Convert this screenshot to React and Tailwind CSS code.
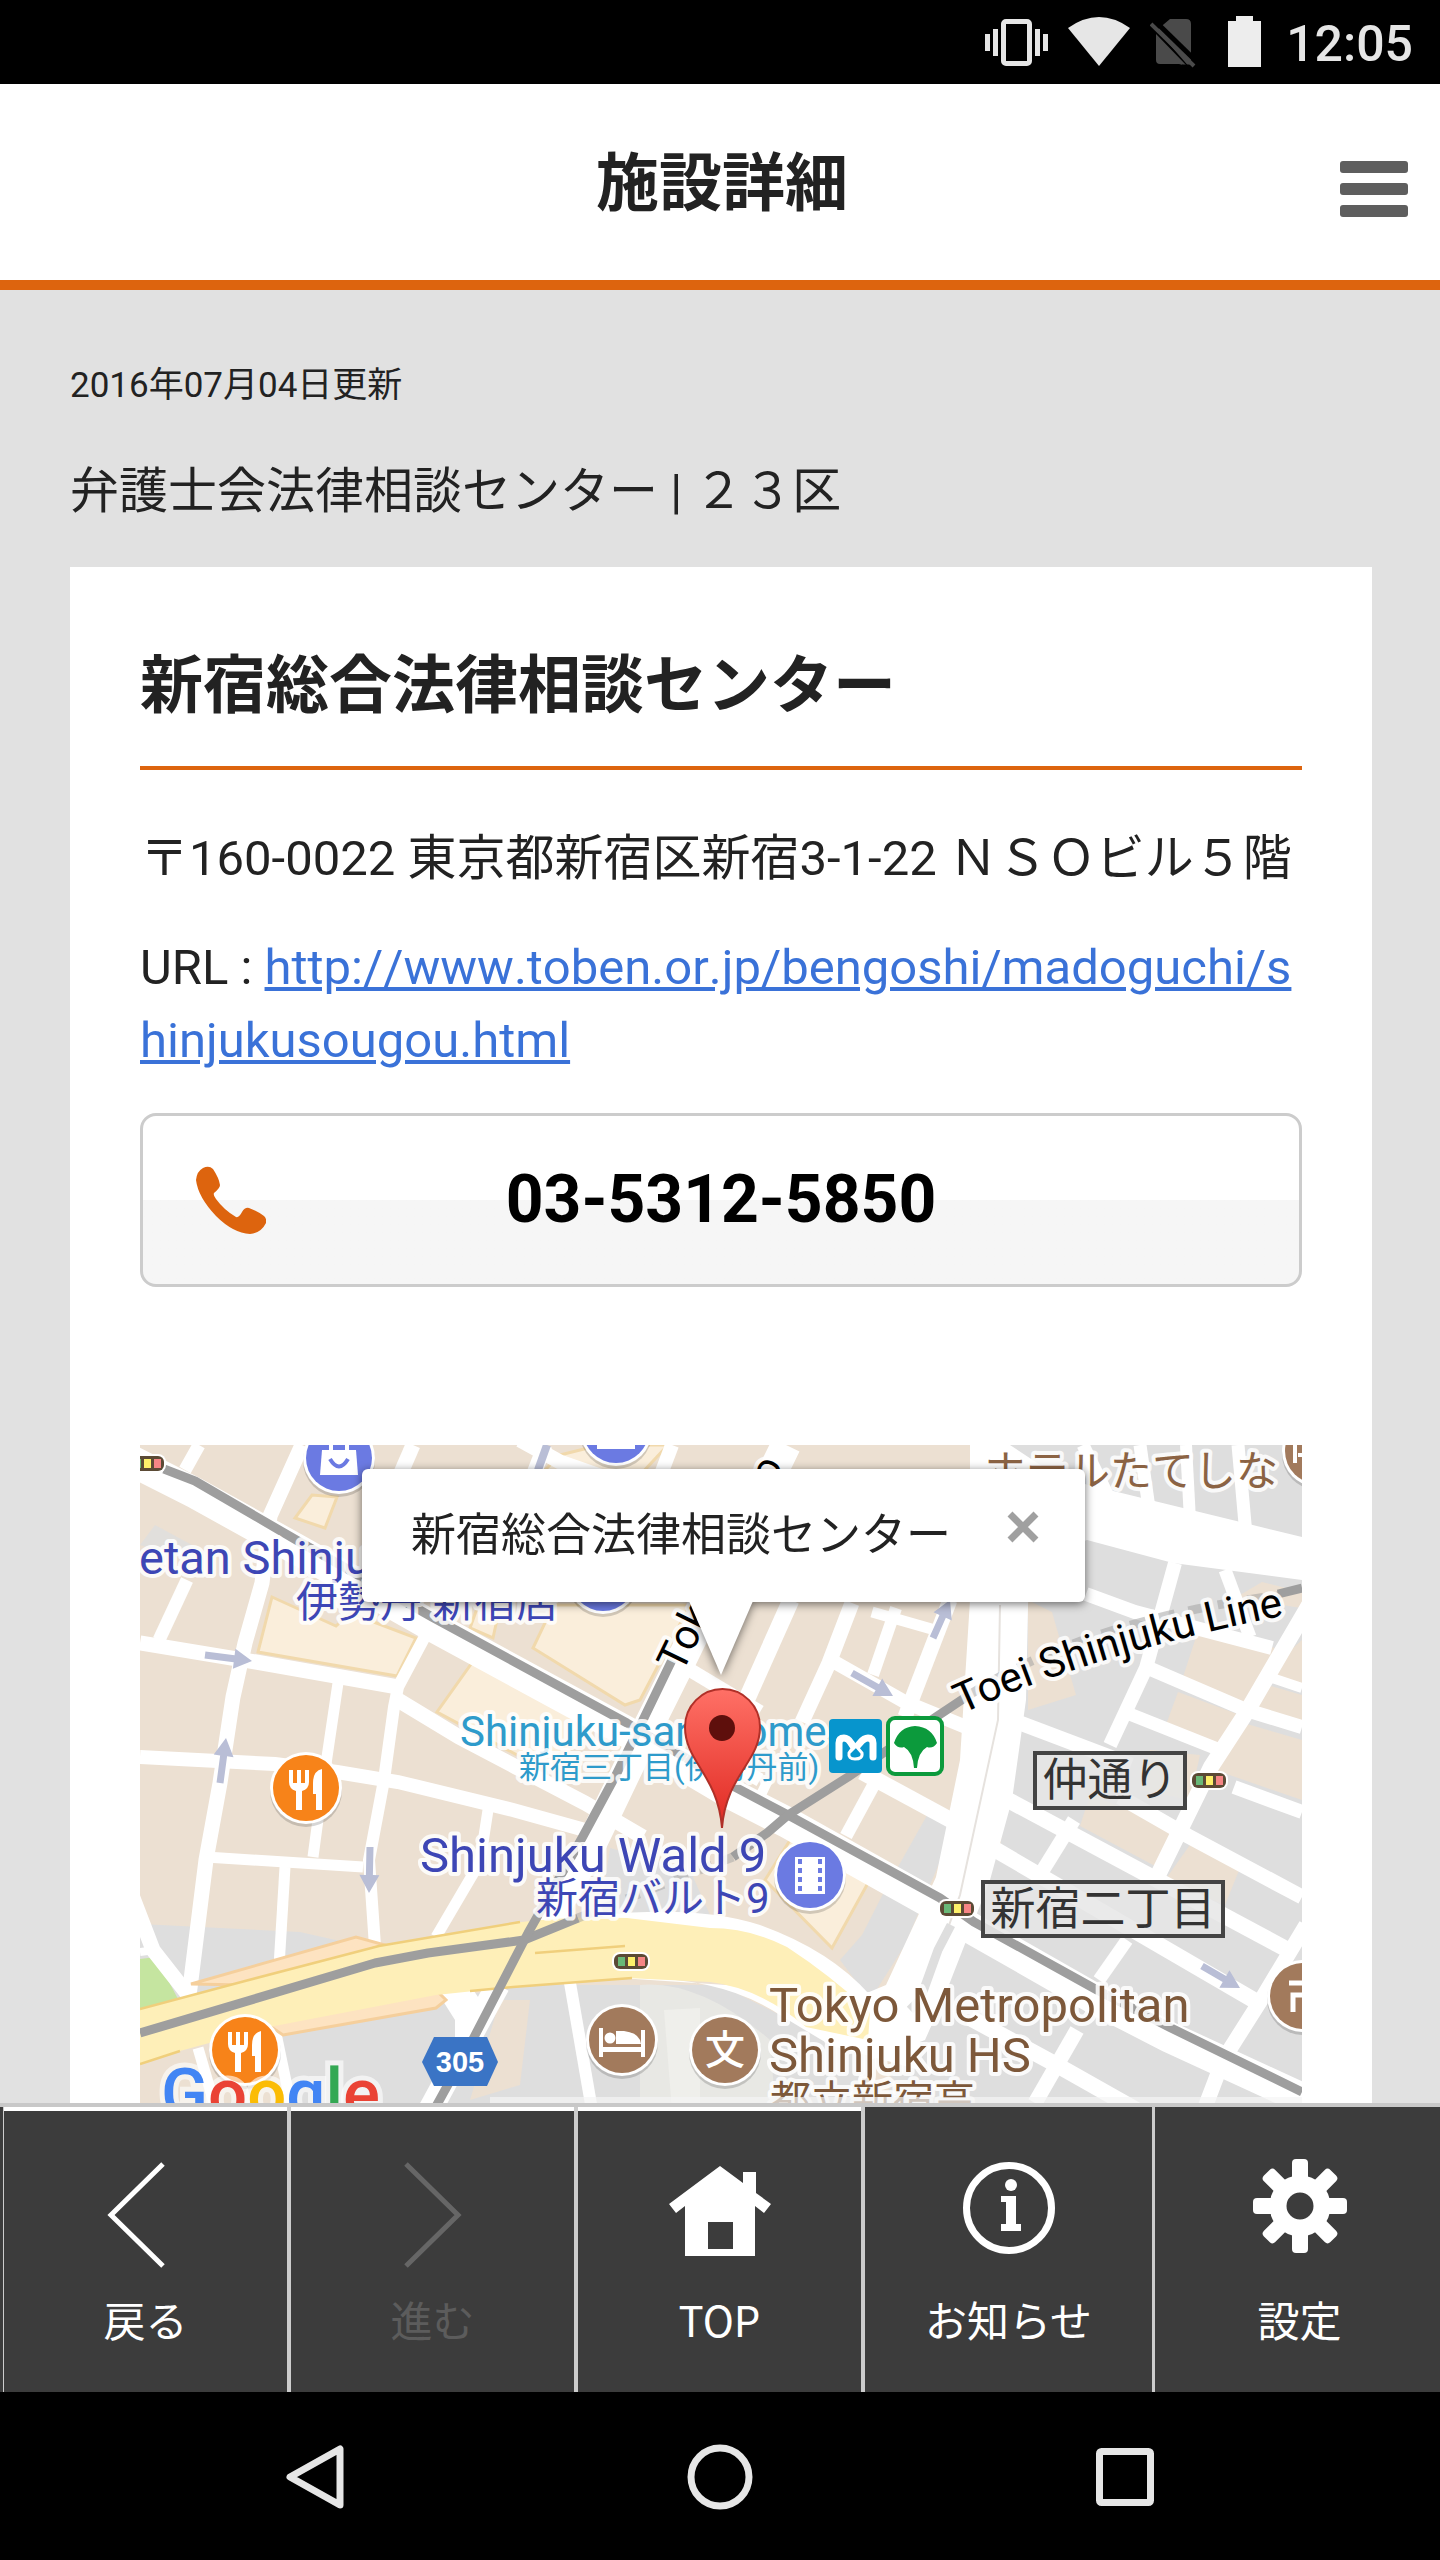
import React from "react";

const FONT = 'font-["Roboto","Noto_Sans_CJK_JP",sans-serif]';

function StatusBar() {
  return (
    <div className="flex h-[84px] shrink-0 items-center justify-end bg-black pr-[27px] text-[#e6e6e6]">
      <svg viewBox="985 16 64 52" className="mr-[19px] h-[52px] w-16" fill="#e6e6e6" aria-hidden="true">
        <rect x="985" y="34" width="5" height="17" />
        <rect x="993" y="29" width="5" height="27" />
        <rect x="1035" y="29" width="5" height="27" />
        <rect x="1043" y="34" width="5" height="17" />
        <rect x="1003.500" y="21.500" width="26" height="42" rx="2.500" fill="none" stroke="#e6e6e6" strokeWidth="5" />
      </svg>
      <svg viewBox="1068 16 62 52" className="mr-5 h-[52px] w-[62px]" fill="#e6e6e6" aria-hidden="true">
        <path d="M1068 28Q1099 6 1130 28L1099 66Z" />
      </svg>
      <svg viewBox="1151 16 48 52" className="mr-[30px] h-[52px] w-12" aria-hidden="true">
        <path d="M1171 19H1187Q1192 19 1192 24V69L1158 30ZM1157 34L1188 66L1180 64H1161Q1157 64 1157 60Z" fill="#4a4a4a" />
        <path d="M1157 22L1200 64" stroke="#000" strokeWidth="5" />
        <path d="M1183 64.500H1200V72H1183Z" fill="#000" />
        <path d="M1152 24L1195 66" stroke="#4a4a4a" strokeWidth="4" />
      </svg>
      <svg viewBox="1229 16 33 52" className="mr-[25px] h-[52px] w-[33px]" fill="#ededed" aria-hidden="true">
        <path d="M1237 16H1254V21H1262V67H1229V21H1237Z" />
      </svg>
      <span className="pt-1 text-[50px] leading-[56px] font-medium">12:05</span>
    </div>
  );
}

function Header() {
  return (
    <header className="relative flex h-[206px] shrink-0 items-center justify-center border-b-10 border-[#dd640e] bg-white pt-1 pl-1">
      <h1 className="text-[63px] leading-[90px] font-bold text-[#222]">施設詳細</h1>
      <button type="button" aria-label="メニュー" className="absolute top-[77px] right-8 flex flex-col gap-[10px]">
        <span className="h-3 w-[68px] rounded-[3px] bg-[#5e5e5e]" />
        <span className="h-3 w-[68px] rounded-[3px] bg-[#5e5e5e]" />
        <span className="h-3 w-[68px] rounded-[3px] bg-[#5e5e5e]" />
      </button>
    </header>
  );
}

/* Map coordinates: x 140-1302, y 1445-2165 */

const streets = [
  ["M199 1445L185 1470", 13],
  ["M302 1445L270 1516L262 1583L245 1643L233 1697L220 1783L206 1860L189 1996", 15],
  ["M413 1445L384 1512", 15],
  ["M545 1445L512 1530", 15],
  ["M672 1445L640 1530", 14],
  ["M520 1440L560 1462L640 1490", 15],
  ["M187 1580L159 1640", 13],
  ["M140 1643L256 1662L398 1687", 15],
  ["M430 1627L398 1687L394 1707L384 1780L369 1860L375 1946", 12],
  ["M338 1683L327 1757L317 1827L313 1857", 11],
  ["M398 1700L459 1737L516 1767L585 1803L643 1837", 15],
  ["M140 1757L275 1764L337 1772L398 1782L513 1810L585 1830", 14],
  ["M206 1857L363 1867", 11],
  ["M285 1867L279 1967", 11],
  ["M488 1810L480 1862L436 1937", 11],
  ["M130 1890L153 1950L189 1996", 15],
  ["M140 1952L155 1950", 8],
  ["M690 1670L760 1712", 14],
  ["M690 1740L760 1780", 14],
  ["M791 1600L741 1712", 17],
  ["M852 1603L829 1663L802 1722", 15],
  ["M896 1608L873 1675", 12],
  ["M950 1600L905 1717", 15],
  ["M829 1659L905 1702L966 1727", 14],
  ["M872 1612L935 1630", 11],
  ["M878 1777L846 1836", 13],
  ["M862 1772L958 1824", 16],
  ["M768 1780L757 1803", 10],
  ["M1140 1445L1150 1515", 13],
  ["M1083 1445L1110 1500", 13],
  ["M1186 1445L1190 1520", 12],
  ["M1238 1445L1246 1535", 13],
  ["M1086 1594L1135 1612L1272 1648", 14],
  ["M1175 1563L1146 1668L1110 1745", 14],
  ["M1225 1570L1250 1637", 13],
  ["M1312 1600L1246 1713L1211 1767L1158 1875", 16],
  ["M1146 1667L1246 1710L1302 1727", 14],
  ["M1127 1713L1220 1750", 13],
  ["M1020 1723L1131 1765", 15],
  ["M1269 1677L1302 1688", 10],
  ["M1234 1787L1302 1812", 14],
  ["M1120 1797L1188 1836L1302 1897", 15],
  ["M1008 1800L1288 1950", 16],
  ["M996 1850L1257 2002", 16],
  ["M1074 1820L1043 1870", 14],
  ["M1127 1940L1099 1980", 13],
  ["M1306 1925L1261 2000L1223 2060L1204 2110", 15],
  ["M970 2018L1055 2064L1140 2112", 16],
  ["M1077 2030L1035 2103", 15],
  ["M570 1983L592 2110", 12],
  ["M274 2024L292 2110", 11],
  ["M198 2048L216 2110", 11],
  ["M498 1985L430 2110", 24],
];

const blueArrows = [
  [205, 1655, 252, 1661],
  [220, 1783, 226, 1738],
  [370, 1847, 369, 1893],
  [933, 1638, 950, 1600],
  [852, 1673, 893, 1696],
  [1202, 1966, 1240, 1988],
];

function Arrow({ x1, y1, x2, y2 }) {
  const a = Math.atan2(y2 - y1, x2 - x1);
  const len = Math.hypot(x2 - x1, y2 - y1);
  return (
    <path
      transform={`translate(${x1} ${y1}) rotate(${(a * 180) / Math.PI})`}
      d={`M0 -3.500H${len - 18}V-10L${len} 0L${len - 18} 10V3.500H0Z`}
      fill="#b9bed6"
    />
  );
}

function Signal({ x, y }) {
  return (
    <g>
      <rect x={x - 2} y={y - 2} width="38" height="19" rx="8" fill="#fff" />
      <rect x={x} y={y} width="34" height="15" rx="6" fill="#5b4a35" />
      <rect x={x + 4} y={y + 3} width="7" height="9" fill="#69b877" />
      <rect x={x + 14} y={y + 3} width="7" height="9" fill="#fdf06a" />
      <rect x={x + 24} y={y + 3} width="7" height="9" fill="#f58585" />
    </g>
  );
}

function Poi({ x, y, color, children }) {
  return (
    <g transform={`translate(${x} ${y})`}>
      <circle cy="3" r="36" fill="#000" opacity=".16" />
      <circle r="36" fill="#fff" />
      <circle r="33" fill={color} />
      {children}
    </g>
  );
}

function Fork() {
  return (
    <g fill="#fff">
      <path d="M-17 -18V-6Q-17 1 -10 3V22H-4V3Q3 1 3 -6V-18H-1V-5H-5V-18H-9V-5H-13V-18Z" />
      <path d="M16 -19Q7 -17 7 -5V6H10V22H16Z" />
    </g>
  );
}

function Bag() {
  return (
    <g>
      <path d="M-17 -8H17L19 17H-19Z" fill="#fff" />
      <path d="M-8 -7V-15Q0 -26 8 -15V-7" fill="none" stroke="#fff" strokeWidth="4" />
      <path d="M-9 1Q0 16 9 1" fill="none" stroke="#6b7ae2" strokeWidth="4" />
    </g>
  );
}

function Label({ x, y, size, color, children, ...rest }) {
  return (
    <text x={x} y={y} fontSize={size} fill={color} stroke="#fff" strokeOpacity=".85" strokeWidth="8" strokeLinejoin="round" paintOrder="stroke" {...rest}>
      {children}
    </text>
  );
}

function MapDrawing() {
  return (
    <svg viewBox="140 1445 1162 720" preserveAspectRatio="xMidYMin slice" className={`h-full w-full ${FONT}`} role="img" aria-label="新宿総合法律相談センター周辺の地図">
      <rect x="140" y="1445" width="1162" height="720" fill="#ece0d2" />

      {/* grey blocks */}
      <g fill="#dedede">
        <path d="M1010 1445H1302V2165H880L900 2000L940 1930L1000 1850L1028 1600Z" />
        <path d="M140 1924L300 1932L380 1950L300 1975L140 2020Z" />
        <path d="M283 2035L440 2000L520 1985H720L870 2060L880 2165H283Z" />
        <path d="M930 1810L955 1825L905 1945L870 2000L840 1960L862 1935L885 1890Z" />
        <path d="M610 1848L690 1870L710 1915H600Z" />
        <path d="M140 1545L155 1525L205 1552L190 1560Z" opacity=".8" />
      </g>
      <path d="M640 1985Q700 1980 770 2040L780 2165H640Z" fill="#e8e8e4" />
      <path d="M664 2010L700 2008V2110H672Z" fill="#efefeb" />

      {/* beige blocks of the eastern district */}
      <g fill="#ece0d2">
        <path d="M1028 1600L1052 1612L1076 1695L1028 1710Z" />
        <path d="M1200 1625L1275 1648L1246 1708L1182 1680Z" />
        <path d="M1178 1692L1240 1715L1215 1748L1164 1730Z" />
        <path d="M1285 1655L1302 1640V1685L1270 1676Z" />
        <path d="M1264 1684L1302 1695V1722L1252 1706Z" />
        <path d="M1240 1722L1302 1740V1800L1215 1770Z" />
        <path d="M1090 1795L1180 1830L1155 1866L1080 1826Z" />
        <path d="M1192 1842L1240 1868L1225 1905L1165 1880Z" />
        <path d="M1150 1750L1200 1755L1190 1800L1140 1790Z" />
        <path d="M1262 1582L1302 1592V1608L1235 1598Z" />
        <path d="M500 2000H530L520 2085L470 2100Z" />
      </g>
      <path d="M140 1959L156 1957L178 1999L140 2009Z" fill="#c5e5a0" />

      {/* commercial buildings */}
      <g fill="#faeedb" stroke="#f1d9ac" strokeWidth="3">
        <path d="M312 1495L337 1497L325 1528L295 1518Z" />
        <path d="M272 1597L336 1626L350 1613L416 1638L397 1676L258 1652Z" />
        <path d="M545 1623L552 1605H690L640 1700L625 1705L533 1648Z" />
        <path d="M480 1600L500 1606L493 1638L470 1628Z" />
        <path d="M474 1660L590 1720L545 1770L437 1712Z" />
        <path d="M560 1455L600 1445H668L640 1475H540Z" />
        <path d="M797 1829L873 1874L832 1948L765 1880Z" />
      </g>

      {/* streets */}
      <g fill="none" stroke="#fff">
        {streets.map(([d, w]) => (
          <path key={d} d={d} strokeWidth={w} />
        ))}
        <path d="M130 1460L195 1493L298 1550L432 1626L627 1732L733 1795L788 1823L940 1908L974 1930L1097 2000L1169 2037L1310 2102" strokeWidth="31" />
        <path d="M786 1445L680 1663L640 1743L592 1843L534 1948" strokeWidth="30" />
      </g>

      {/* wide avenues */}
      <g fill="#fff">
        <path d="M970 1445H1010L1060 1478L1302 1537V1580L1173 1563L1087 1540L1029 1560L1026 1700L1012 1800L990 1880L945 1995L925 2040L870 2060L850 2000L886 1985L936 1877L960 1760L970 1600Z" />
        <path d="M600 1915Q700 1905 760 1925Q830 1950 870 1995L900 2040L850 2050Z" />
        <path d="M620 1978Q720 1975 780 2015L830 2045L920 2070V2040L800 1990Z" />
        <path d="M436 1990L470 1985L480 2000L500 1985L475 2045L455 2055L455 2020Z" />
      </g>
      <path d="M1000 1605L998 1720L960 1895L940 1950" fill="none" stroke="#e6e2de" strokeWidth="2" />
      <path d="M951 1925L938 1950L920 2000L910 2010" fill="none" stroke="#dedede" strokeWidth="9" />

      {/* highway */}
      <path d="M191 1984L356 1937L385 1945L245 1985ZM283 2035L436 2008L446 2000L436 1990L264 2022Z" fill="#fde3c1" stroke="#f5cf9c" strokeWidth="3" />
      <path d="M140 2009L245 1981L379 1946L513 1923Q570 1916 627 1918L710 1928Q750 1928 787 1947Q830 1975 870 2012L868 2040L806 2027Q760 1988 710 1982L627 1978L513 1987L436 1995L264 2028L180 2051L140 2064Z" fill="#feefb8" />
      <path d="M140 2009L245 1981L379 1946L520 1922M140 2064L180 2051M470 1991L513 1987L632 1978M535 1953L625 1946" fill="none" stroke="#f0cf7c" strokeWidth="2.500" />

      {blueArrows.map(([x1, y1, x2, y2]) => (
        <Arrow key={`${x1}-${y1}`} x1={x1} y1={y1} x2={x2} y2={y2} />
      ))}
      <path d="M547 1445L538 1470" stroke="#b9bed6" strokeWidth="8" />

      {/* railways */}
      <g fill="none" stroke="#9e9e9e" strokeWidth="9" strokeLinejoin="round">
        <path d="M164 1469L195 1481L298 1541L432 1617L627 1723L733 1786L788 1815L940 1898L974 1922L1097 1990L1169 2027L1302 2092" />
        <path d="M140 2033L375 1963L428 1953L524 1940L578 1918" />
        <path d="M733 1857L767 1833L788 1815L848 1777L936 1717L966 1697" />
        <path d="M966 1697Q1080 1622 1280 1595" strokeDasharray="16 14" opacity=".5" />
        <path d="M1278 1594L1302 1588" />
        <path d="M578 1918L733 1857" strokeDasharray="14 12" opacity=".45" />
        <path d="M672 1660L643 1720L616 1775L582 1838L528 1933L471 2043L434 2110" />
      </g>

      {/* points of interest */}
      <Poi x={339} y={1458} color="#6b7ae2"><Bag /></Poi>
      <Poi x={616} y={1430} color="#6b7ae2"><rect x="-19" y="-8" width="38" height="27" fill="#fff" /></Poi>
      <Poi x={603} y={1578} color="#6b7ae2" />
      <Poi x={306} y={1788} color="#f78319"><Fork /></Poi>
      <Poi x={245} y={2050} color="#f78319"><Fork /></Poi>
      <Poi x={622} y={2040} color="#a27a5c">
        <g fill="#fff">
          <path d="M-23 -12H-19V7H19V-10H23V17H19V12H-19V17H-23Z" />
          <circle cx="-12" cy="-2" r="5.500" />
          <path d="M-6 4V-9H2Q18 -7 19 4Z" />
        </g>
      </Poi>
      <Poi x={725} y={2050} color="#a27a5c">
        <text y="14" textAnchor="middle" fontSize="40" fontWeight="500" fill="#fff">文</text>
      </Poi>
      <Poi x={810} y={1875} color="#6b7ae2">
        <path d="M-15 -18H15V19H-15Z" fill="#fff" />
        <path d="M-10 -16V18M10 -16V18" stroke="#6b7ae2" strokeWidth="4" strokeDasharray="5 4" />
      </Poi>
      <Poi x={1303} y={1996} color="#a27a5c">
        <path d="M-14 -13H8M-10 16V-1H4V16" stroke="#fff" strokeWidth="5" fill="none" />
      </Poi>
      <Poi x={1318} y={1451} color="#a27a5c">
        <path d="M-23 -12V12M-20 4H-4" stroke="#fff" strokeWidth="4" />
      </Poi>

      <Signal x={130} y={1456} />
      <Signal x={614} y={1954} />
      <Signal x={940} y={1901} />
      <Signal x={1192} y={1773} />

      <path d="M434 2037H487L498 2062L487 2086H434L422 2062Z" fill="#3a74c5" />
      <text x="460" y="2072" textAnchor="middle" fontSize="29" fontWeight="700" fill="#fff" className='font-["Liberation_Sans",sans-serif]'>305</text>

      {/* area names */}
      <Label x="139" y="1574" size="47" color="#3d46b5">etan Shinjuku</Label>
      <Label x="296" y="1617" size="42" color="#3d46b5">伊勢丹 新宿店</Label>
      <Label x="984" y="1486" size="42" color="#8b6344">ホテルたてしな</Label>
      <Label x="460" y="1746" size="42" color="#2e9bcb">Shinjuku-sanchome</Label>
      <Label x="519" y="1778" size="31" color="#2e9bcb">新宿三丁目(伊勢丹前)</Label>
      <Label x="420" y="1872" size="49" color="#3d46b5">Shinjuku Wald 9</Label>
      <Label x="536" y="1913" size="42" color="#3d46b5">新宿バルト9</Label>
      <Label x="769" y="2022" size="49" color="#7d583a">Tokyo Metropolitan</Label>
      <Label x="769" y="2072" size="49" color="#7d583a">Shinjuku HS</Label>
      <Label x="770" y="2115" size="41" color="#7d583a">都立新宿高</Label>
      <Label x="0" y="0" size="42" color="#000" transform="translate(682 1674) rotate(-64)">Tokyo Metro</Label>
      <path id="toei" d="M962 1714Q1100 1650 1312 1610" fill="none" />
      <Label size="42" color="#000"><textPath href="#toei">Toei Shinjuku Line</textPath></Label>

      <g fill="#e6e6e6" fillOpacity=".85" stroke="#444" strokeWidth="4">
        <rect x="1035" y="1753" width="150" height="55" />
        <rect x="983" y="1882" width="240" height="54" />
      </g>
      <text x="1110" y="1796" textAnchor="middle" fontSize="45" fill="#333">仲通り</text>
      <text x="1103" y="1925" textAnchor="middle" fontSize="45" fill="#333">新宿二丁目</text>

      {/* station marks */}
      <rect x="829" y="1719" width="53" height="54" rx="4" fill="#0795cd" />
      <g fill="none" stroke="#fff" strokeLinecap="round" strokeLinejoin="round">
        <path d="M839 1757V1743Q839 1738 844 1738Q848 1738 851 1743L859 1755" strokeWidth="7" />
        <path d="M873 1757V1743Q873 1738 868 1738Q864 1738 860 1743L852 1752" strokeWidth="7" />
        <path d="M856 1746L849 1753Q848 1759 855 1759Q863 1759 862 1753Z" strokeWidth="3" fill="#0795cd" />
      </g>
      <rect x="888" y="1718" width="54" height="56" rx="7" fill="#fff" stroke="#0c9a3c" strokeWidth="4" />
      <path d="M894 1743Q899 1727 915 1726Q932 1727 937 1743Q933 1749 927 1747Q918 1752 917 1768H914Q913 1752 904 1747Q898 1749 894 1743Z" fill="#0c9a3c" />

      {/* location pin */}
      <defs>
        <linearGradient id="pin" x1="0" y1="0" x2="0" y2="1">
          <stop offset="0" stopColor="#ff7066" />
          <stop offset="1" stopColor="#e02a22" />
        </linearGradient>
      </defs>
      <path d="M722 1828C718 1775 685 1762 685 1727A37.500 38 0 0 1 760 1727C760 1762 726 1775 722 1828Z" fill="url(#pin)" stroke="#b03028" strokeWidth="2" />
      <circle cx="722" cy="1728" r="13" fill="#5e0f0c" />

      <rect x="490" y="2097" width="812" height="68" fill="#f5f5f5" opacity=".7" />
      <text x="161" y="2117" fontSize="69" fontWeight="500" stroke="#fff" strokeOpacity=".6" strokeWidth="10" paintOrder="stroke">
        <tspan fill="#4285f4">G</tspan>
        <tspan fill="#ea4335">o</tspan>
        <tspan fill="#fbbc05">o</tspan>
        <tspan fill="#4285f4">g</tspan>
        <tspan fill="#34a853">l</tspan>
        <tspan fill="#ea4335">e</tspan>
      </text>
    </svg>
  );
}

function MapPanel() {
  return (
    <div className="relative mt-[158px] h-[720px] overflow-hidden">
      <MapDrawing />
      <div className="absolute top-6 left-1/2 -translate-x-1/2 drop-shadow-[0_2px_5px_rgba(0,0,0,0.55)]">
        <div className="ml-[5px] flex h-[133px] items-center rounded-[6px] bg-white pr-[46px] pl-[49px]">
          <p className="text-[45px] leading-[66px] whitespace-nowrap text-[#222]">新宿総合法律相談センター</p>
          <button type="button" aria-label="閉じる" className="mb-[18px] ml-14">
            <svg viewBox="0 0 32 32" className="size-8" aria-hidden="true">
              <path d="M3 3L29 29M29 3L3 29" stroke="#a0a0a0" strokeWidth="7" />
            </svg>
          </button>
        </div>
        <svg viewBox="0 0 64 74" className="mx-auto -mt-px block h-[74px] w-16" aria-hidden="true">
          <path d="M0 0H64L32 74Z" fill="#fff" />
        </svg>
      </div>
    </div>
  );
}

function Detail() {
  return (
    <main className="min-h-0 flex-1 overflow-hidden bg-[#e1e1e1] px-[70px] pt-[69px] text-[#222]">
      <p className="text-[35px] leading-[54px]">2016年07月04日更新</p>
      <p className="mt-[42px] text-[49px] leading-[74px]">弁護士会法律相談センター | ２３区</p>
      <section className="mt-[38px] mr-[-2px] bg-white px-[70px] pt-[72px]">
        <h2 className="border-b-4 border-[#dd640e] pb-[33px] text-[63px] leading-[94px] font-bold">新宿総合法律相談センター</h2>
        <p className="mt-[52px] text-[49px] leading-[74px]">〒160-0022 東京都新宿区新宿3-1-22 ＮＳＯビル５階</p>
        <p className="mt-[35px] text-[49px] leading-[73px] break-all [font-kerning:none]">
          URL :{" "}
          <a href="http://www.toben.or.jp/bengoshi/madoguchi/shinjukusougou.html" className="text-[#3a72d8] underline">
            http://www.toben.or.jp/bengoshi/madoguchi/shinjukusougou.html
          </a>
        </p>
        <a
          href="tel:03-5312-5850"
          className="relative mt-9 flex h-[174px] items-center justify-center rounded-2xl border-[3px] border-[#ccc] bg-linear-to-b from-white from-50% to-[#f6f6f6] to-50% text-[66px] leading-[80px] font-bold text-black"
        >
          <svg viewBox="0 0 70 68" className="absolute top-[50px] left-[53px] h-[68px] w-[70px]" aria-hidden="true">
            <path d="M7 2Q13 -1 17 3Q23 12 24 19Q24 22 18 27Q17 29 20 33Q28 44 40 51Q43 52 46 46Q49 41 53 42Q61 45 68 50Q71 53 70 57Q65 67 54 68Q37 67 20 50Q2 31 0 14Q1 5 7 2Z" fill="#dd640e" />
          </svg>
          03-5312-5850
        </a>
        <MapPanel />
      </section>
    </main>
  );
}

const NAV_BASE = "flex flex-col items-center border-[#ccc] bg-[#3c3c3c] text-[42px] leading-[60px] text-white";

function BottomNav() {
  return (
    <nav className="grid h-[289px] shrink-0 grid-cols-[284fr_287fr_287fr_291fr_288fr] border-t-4 border-[#c8c8c8] bg-[#3c3c3c] pl-[3px] font-['Noto_Sans_CJK_JP',sans-serif]">
      <button type="button" className={`${NAV_BASE} border-l`}>
        <span className="h-1 w-full bg-white" />
        <svg viewBox="0 0 60 108" className="mt-[50px] mr-5 h-[108px] w-[60px]" fill="none" stroke="#fff" strokeWidth="5" aria-hidden="true">
          <path d="M57 3L5 54L57 105" />
        </svg>
        <span className="mt-5">戻る</span>
      </button>
      <button type="button" disabled className={`${NAV_BASE} border-l-4 text-[#5c5c5c]!`}>
        <span className="h-1 w-full bg-white" />
        <svg viewBox="0 0 60 108" className="mt-[50px] h-[108px] w-[60px]" fill="none" stroke="#666" strokeWidth="5" aria-hidden="true">
          <path d="M3 3L55 54L3 105" />
        </svg>
        <span className="mt-5">進む</span>
      </button>
      <button type="button" className={`${NAV_BASE} border-l-4 pl-0`}>
        <span className="h-1 w-full bg-white" />
        <svg viewBox="0 0 102 90" className="mt-[55px] h-[90px] w-[102px]" fill="#fff" aria-hidden="true">
          <path fillRule="evenodd" d="M51 0L74 17V6H87V27L102 38L95 47L86 40V90H16V40L7 47L0 38ZM39 56V83H64V56Z" />
        </svg>
        <span className="mt-[33px]">TOP</span>
      </button>
      <button type="button" className={`${NAV_BASE} border-l-4`}>
        <svg viewBox="0 0 92 92" className="mt-[55px] size-[92px]" aria-hidden="true">
          <circle cx="46" cy="46" r="42.500" fill="none" stroke="#fff" strokeWidth="7" />
          <circle cx="48" cy="23" r="6" fill="#fff" />
          <path d="M38 34H53V62H58V69H38V62H43V40H38Z" fill="#fff" />
        </svg>
        <span className="mt-[35px]">お知らせ</span>
      </button>
      <button type="button" className={`${NAV_BASE} border-l-3 pl-1`}>
        <svg viewBox="-48 -48 96 96" className="mt-[51px] size-24" fill="#fff" aria-hidden="true">
          {[0, 45, 90, 135, 180, 225, 270, 315].map((a) => (
            <rect key={a} x="-8" y="-47" width="16" height="26" rx="4" transform={`rotate(${a})`} />
          ))}
          <circle r="22" fill="none" stroke="#fff" strokeWidth="17" />
        </svg>
        <span className="mt-[35px]">設定</span>
      </button>
    </nav>
  );
}

function SystemBar() {
  return (
    <div className="grid h-[168px] shrink-0 grid-cols-3 items-center justify-items-center bg-black px-28 pt-0.5">
      <button type="button" aria-label="戻る">
        <svg viewBox="0 0 66 66" className="size-[66px]" fill="none" stroke="#e6e6e6" strokeWidth="7" strokeLinejoin="round" aria-hidden="true">
          <path d="M58 5V61L8 33Z" />
        </svg>
      </button>
      <button type="button" aria-label="ホーム">
        <svg viewBox="0 0 66 66" className="size-[66px]" fill="none" stroke="#e6e6e6" strokeWidth="7" aria-hidden="true">
          <circle cx="33" cy="33" r="29" />
        </svg>
      </button>
      <button type="button" aria-label="履歴">
        <svg viewBox="0 0 66 66" className="size-[66px]" fill="none" stroke="#e6e6e6" strokeWidth="7" aria-hidden="true">
          <rect x="7.500" y="7.500" width="51" height="51" rx="2" />
        </svg>
      </button>
    </div>
  );
}

export default function App() {
  return (
    <div className={`flex h-screen flex-col overflow-hidden ${FONT}`}>
      <StatusBar />
      <Header />
      <Detail />
      <BottomNav />
      <SystemBar />
    </div>
  );
}
